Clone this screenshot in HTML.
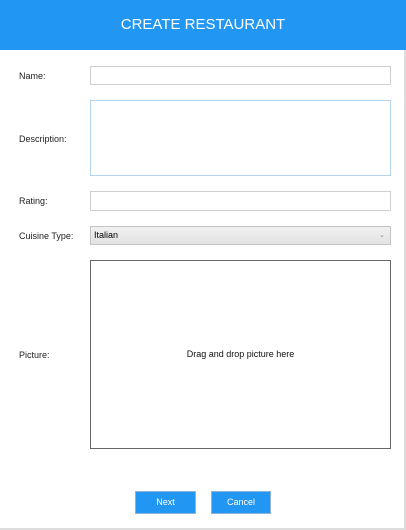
<!DOCTYPE html>
<html><head><style>
*{margin:0;padding:0;box-sizing:border-box}
body{width:406px;height:530px;background:#fff;font-family:"Liberation Sans",sans-serif;position:relative;overflow:hidden}
.hdr{position:absolute;left:0;top:0;width:406px;height:50px;background:#2196f3;color:#fff;font-size:15px;text-align:center;line-height:50px}
.lbl{position:absolute;left:19px;font-size:9px;color:#222}
.box{position:absolute;left:90px;width:301px;background:#fff;border:1px solid #cfcfcf}
.btn{position:absolute;top:491px;height:23px;background:#2196f3;border:1px solid #8fb4d6;color:#fff;font-size:9px;text-align:center;line-height:21px}
</style></head><body>
<div class="hdr">CREATE RESTAURANT</div>
<div class="lbl" style="top:71px">Name:</div>
<div class="box" style="top:66px;height:19px"></div>
<div class="lbl" style="top:134px">Description:</div>
<div class="box" style="top:100px;height:76px;border-color:#b5d4f2"></div>
<div class="lbl" style="top:196px">Rating:</div>
<div class="box" style="top:191px;height:20px"></div>
<div class="lbl" style="top:231px">Cuisine Type:</div>
<div class="box" style="top:226px;height:19px;background:linear-gradient(#f0f0f0,#e3e3e3);border-color:#c4c4c4;font-size:9px;line-height:17px;padding-left:3px">Italian<span style="position:absolute;right:5px;top:0;color:#888;font-size:7px">&#8964;</span></div>
<div class="lbl" style="top:350px">Picture:</div>
<div class="box" style="top:260px;height:189px;border:1.5px solid #666;font-size:9px;text-align:center;line-height:186px;color:#111">Drag and drop picture here</div>
<div class="btn" style="left:135px;width:61px">Next</div>
<div class="btn" style="left:211px;width:60px">Cancel</div>
<div style="position:absolute;left:0;top:528px;width:406px;height:2px;background:#ddd"></div>
<div style="position:absolute;left:404px;top:50px;width:2px;height:480px;background:#ddd"></div>
</body></html>
